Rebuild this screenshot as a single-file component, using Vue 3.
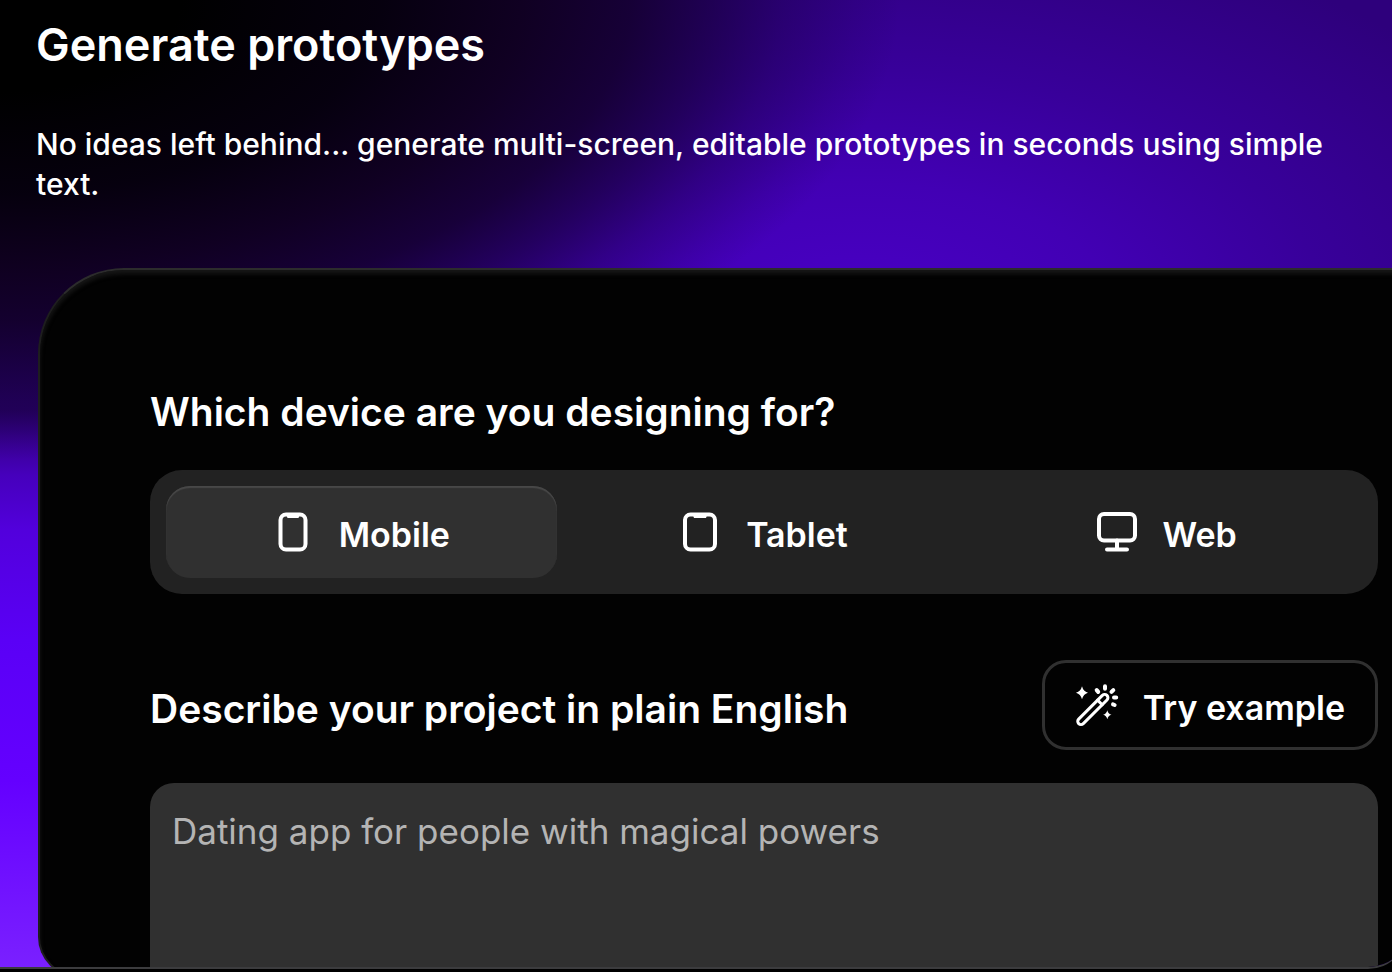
<script setup>
import { ref } from 'vue'

const devices = ['Mobile', 'Tablet', 'Web']
const selected = ref('Mobile')
const prompt = ref('')
</script>

<template>
  <main class="page">
    <section class="panel">
      <header class="intro">
        <h1>Generate prototypes</h1>
        <p>No ideas left behind... generate multi-screen, editable prototypes in seconds using simple text.</p>
      </header>

      <form class="card" @submit.prevent>
        <h2 id="device-title">Which device are you designing for?</h2>
        <div class="segments" role="group" aria-labelledby="device-title">
          <button
            v-for="device in devices"
            :key="device"
            type="button"
            class="segment"
            :class="{ active: selected === device }"
            :aria-pressed="selected === device"
            @click="selected = device"
          >
            <svg v-if="device === 'Mobile'" width="40" height="40" viewBox="0 0 40 40" aria-hidden="true">
              <rect x="7.500" y="2.500" width="25" height="35" rx="5.500" />
              <path class="notch" d="M13 2h14l-1.500 4h-11z" />
            </svg>
            <svg v-else-if="device === 'Tablet'" width="40" height="40" viewBox="0 0 40 40" aria-hidden="true">
              <rect x="5" y="2.500" width="30" height="35" rx="5.500" />
              <path class="notch" d="M12.500 2h15l-1.500 4h-12z" />
            </svg>
            <svg v-else width="40" height="40" viewBox="0 0 40 40" aria-hidden="true">
              <rect x="2" y="2" width="36" height="26.500" rx="5" />
              <path d="M20 28.500v8M10 37.500h20" />
            </svg>
            <span>{{ device }}</span>
          </button>
        </div>

        <div class="describe">
          <h2><label for="prompt">Describe your project in plain English</label></h2>
          <button type="button" class="example" @click="prompt = 'Dating app for people with magical powers'">
            <svg width="44" height="44" viewBox="0 0 44 44" aria-hidden="true">
              <g transform="rotate(-45 18 26.700)">
                <rect x="-2" y="23.200" width="40" height="6.500" rx="3.250" />
                <path d="M28 23.200v6.500" />
              </g>
              <path class="ray" d="M21.700 7.100l1.500 1.800M30 3.300v2.400M38.300 7.100l-1.800 1.800M41.200 14.600h-2.200M39.600 22l-1.600-.6" />
              <path class="spark" d="M7 3.200q1.300 5.200 6 6.500q-4.700 1.300-6 6.500q-1.300-5.200-6-6.500q4.700-1.300 6-6.500zM32.300 27.200q.9 3.600 4.200 4.500q-3.300.9-4.200 4.500q-.9-3.600-4.200-4.500q3.300-.9 4.200-4.500z" />
            </svg>
            <span>Try example</span>
          </button>
        </div>

        <textarea id="prompt" v-model="prompt" placeholder="Dating app for people with magical powers"></textarea>
      </form>
    </section>
  </main>
</template>

<style>
body {
  background: #000;
}
</style>

<style scoped>
.page {
  box-sizing: border-box;
  height: 100vh;
  padding-bottom: 3px;
  overflow: hidden;
  background: #000;
  color: #fff;
  font-family: Inter, "Liberation Sans", sans-serif;
}

.panel {
  box-sizing: border-box;
  height: 100%;
  margin-right: -16px;
  overflow: hidden;
  border-bottom: 2px solid #3c3c3e;
  border-bottom-right-radius: 40px;
  background:
    radial-gradient(900px 460px at 0 0, #000 0%, #000 20%, rgba(5, 0, 12, 0.98) 42%, rgba(14, 0, 28, 0.94) 58%, rgba(16, 0, 36, 0.82) 70%, rgba(18, 0, 46, 0.6) 79%, rgba(20, 0, 56, 0.35) 87%, rgba(20, 0, 60, 0.12) 95%, rgba(20, 0, 60, 0) 100%),
    linear-gradient(180deg, #220058 0, #260064 410px, #3a0098 445px, #4600bc 475px, #5200dc 530px, #5a00f6 640px, #6400ff 780px, #7a20ff 967px) 0 0 / 80px 100% no-repeat,
    radial-gradient(760px 420px at 860px 330px, #4a00c8 0%, #4200b4 35%, #38009a 62%, #2e007c 100%);
}

.intro {
  padding: 15px 52px 64px 36px;
}

h1,
h2,
p {
  margin: 0;
}

h1 {
  font-size: 45px;
  font-weight: 600;
  line-height: 60px;
}

p {
  margin-top: 49px;
  font-size: 30px;
  font-weight: 500;
  line-height: 40px;
}

.card {
  box-sizing: border-box;
  height: 709px;
  margin: 0 -82px 0 38px;
  padding: 112px 110px 0;
  border: 2px solid #1e1e1e;
  border-top-color: #2c2c2c;
  border-radius: 86px 86px 40px 40px;
  background: #020202;
  box-shadow: inset 0 4px 4px #161616;
}

h2 {
  font-size: 39px;
  font-weight: 600;
  line-height: 60px;
}

.segments {
  display: grid;
  grid-template-columns: repeat(3, 1fr);
  gap: 12px;
  margin-top: 28px;
  padding: 16px;
  border-radius: 32px;
  background: #222;
}

button {
  display: flex;
  align-items: center;
  justify-content: center;
  color: inherit;
  font: inherit;
  font-size: 34px;
  font-weight: 600;
  cursor: pointer;
}

button span {
  padding-top: 4px;
}

.segment {
  gap: 26px;
  height: 92px;
  border: 0;
  border-radius: 24px;
  background: transparent;
}

.segment.active {
  background: #303030;
  box-shadow: inset 0 2px 1px #484848;
}

svg {
  flex: none;
  overflow: visible;
  fill: none;
  stroke: #fff;
  stroke-width: 4;
  stroke-linecap: round;
  stroke-linejoin: round;
}

.notch,
.spark {
  fill: #fff;
  stroke: none;
}

.describe {
  display: flex;
  align-items: center;
  justify-content: space-between;
  margin-top: 66px;
}

.describe h2 {
  padding-top: 8px;
}

.example {
  gap: 24px;
  height: 90px;
  padding: 0 30px;
  border: 3px solid #303030;
  border-radius: 24px;
  background: #020202;
}

.example svg {
  stroke-width: 3;
}

.example .ray {
  stroke-width: 4;
}

textarea {
  display: block;
  box-sizing: border-box;
  width: 100%;
  height: 240px;
  margin-top: 33px;
  padding: 24px 22px;
  border: 0;
  border-radius: 24px;
  background: #303030;
  color: #fff;
  font: inherit;
  font-size: 35px;
  line-height: 48px;
  resize: none;
}

textarea::placeholder {
  color: #b4b4b4;
  opacity: 1;
}
</style>
